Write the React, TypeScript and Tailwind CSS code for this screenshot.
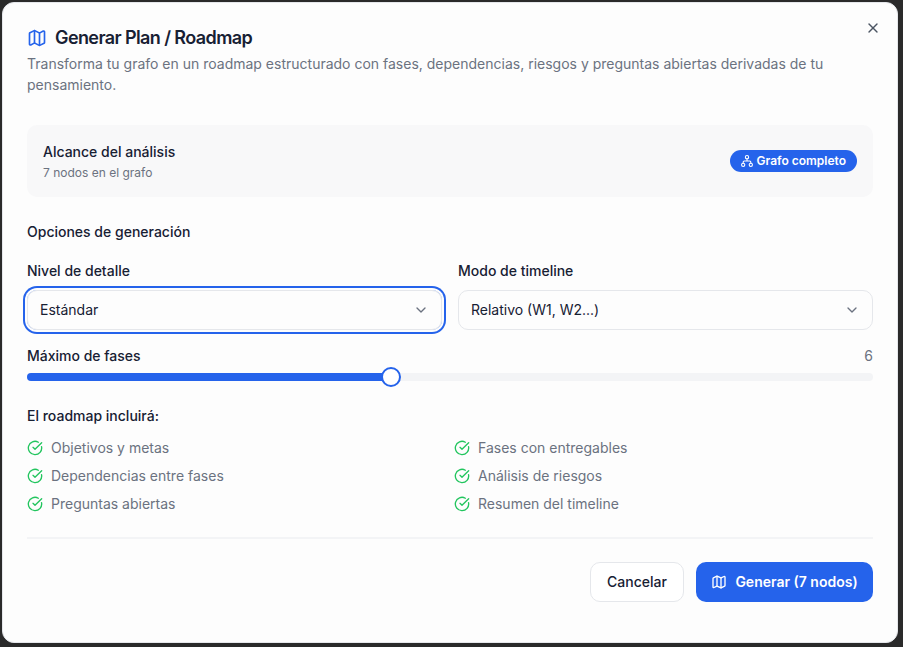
import React from 'react';
import { Map, X, ChevronDown, CircleCheckBig } from 'lucide-react';

const leftItems = ['Objetivos y metas', 'Dependencias entre fases', 'Preguntas abiertas'];
const rightItems = ['Fases con entregables', 'Análisis de riesgos', 'Resumen del timeline'];

function CheckItem({ label }: { label: string }) {
  return (
    <div className="flex h-5 items-center gap-2">
      <CircleCheckBig className="h-4 w-4 text-[#22c55e]" />
      <span className="text-sm text-[#6b7280]">{label}</span>
    </div>
  );
}

// org-chart glyph: three nodes joined by a bracket
function NodesIcon() {
  return (
    <svg viewBox="1 1 22 22" fill="none" stroke="currentColor" strokeWidth="2" strokeLinecap="round" strokeLinejoin="round" className="h-3 w-3">
      <circle cx="12" cy="5" r="3" />
      <circle cx="5" cy="19" r="3" />
      <circle cx="19" cy="19" r="3" />
      <path d="M12 8v4M5 16v-2a2 2 0 0 1 2-2h10a2 2 0 0 1 2 2v2" />
    </svg>
  );
}

export default function App() {
  return (
    <div className="h-[647px] w-[903px] overflow-hidden bg-[#2a2a2a] pl-[2px] pt-[2px] font-['Inter',sans-serif] text-[#172033]">
      <div className="relative flex h-[641px] w-[896px] flex-col rounded-[12px] border border-[#e5e7eb] bg-[#fdfdfd] px-6 pt-[21px]">
        <button className="absolute right-4 top-[16.5px] text-[#4b5563]">
          <X className="h-4 w-4" />
        </button>

        <div className="flex items-center gap-2">
          <Map className="h-5 w-5 text-[#2563eb]" />
          <h2 className="text-lg font-semibold leading-7 tracking-[-0.6px]">Generar Plan / Roadmap</h2>
        </div>
        <p className="mt-[1px] text-sm leading-[21px] text-[#6b7280]">
          Transforma tu grafo en un roadmap estructurado con fases, dependencias, riesgos y preguntas abiertas derivadas de tu pensamiento.
        </p>

        <div className="mt-[30px] flex h-[72px] items-center justify-between rounded-[10px] bg-[#f8f8f9] px-4">
          <div>
            <div className="text-sm font-medium leading-5">Alcance del análisis</div>
            <div className="mt-[3px] text-xs leading-4 text-[#6b7280]">7 nodos en el grafo</div>
          </div>
          <span className="flex h-[22px] items-center gap-1 rounded-full bg-[#2563eb] px-[11px] text-xs font-semibold text-white">
            <NodesIcon />
            Grafo completo
          </span>
        </div>

        <div className="mt-[25px] text-sm font-medium leading-5">Opciones de generación</div>

        <div className="mt-[19px] grid grid-cols-2 gap-4">
          <div>
            <label className="block text-sm font-medium leading-5">Nivel de detalle</label>
            <div className="mt-[9px] flex h-10 items-center justify-between rounded-[10px] border border-[#e5e7eb] px-3 text-sm ring-2 ring-[#2563eb] ring-offset-2 ring-offset-[#fdfdfd]">
              Estándar
              <ChevronDown className="h-4 w-4 text-[#6b7280]" />
            </div>
          </div>
          <div>
            <label className="block text-sm font-medium leading-5">Modo de timeline</label>
            <div className="mt-[9px] flex h-10 items-center justify-between rounded-[10px] border border-[#e5e7eb] px-3 text-sm">
              Relativo (W1, W2...)
              <ChevronDown className="h-4 w-4 text-[#6b7280]" />
            </div>
          </div>
        </div>

        <div className="mt-[16px] flex items-center justify-between text-sm leading-5">
          <span className="font-medium">Máximo de fases</span>
          <span className="text-[#6b7280]">6</span>
        </div>
        <div className="relative mt-[7px] h-2 rounded-full bg-[#f3f4f6]">
          <div className="h-2 w-[364px] rounded-full bg-[#2563eb]" />
          <div className="absolute left-[354px] top-[-6px] h-5 w-5 rounded-full border-2 border-[#2563eb] bg-white" />
        </div>

        <div className="mt-[25px] text-sm font-medium leading-5">El roadmap incluirá:</div>
        <div className="mt-3 grid grid-cols-2 gap-x-2 gap-y-2">
          {leftItems.map((label, i) => (
            <React.Fragment key={label}>
              <CheckItem label={label} />
              <CheckItem label={rightItems[i]} />
            </React.Fragment>
          ))}
        </div>

        <div className="mt-[23px] h-[2px] bg-[#f3f4f6]" />

        <div className="mt-[23px] flex justify-end gap-3">
          <button className="h-10 w-[94px] rounded-[10px] border border-[#e5e7eb] bg-white text-sm font-medium">Cancelar</button>
          <button className="flex h-10 w-[177px] items-center justify-center gap-2 rounded-[10px] bg-[#2563eb] text-sm font-semibold text-white">
            <Map className="h-4 w-4" />
            Generar (7 nodos)
          </button>
        </div>
      </div>
    </div>
  );
}
